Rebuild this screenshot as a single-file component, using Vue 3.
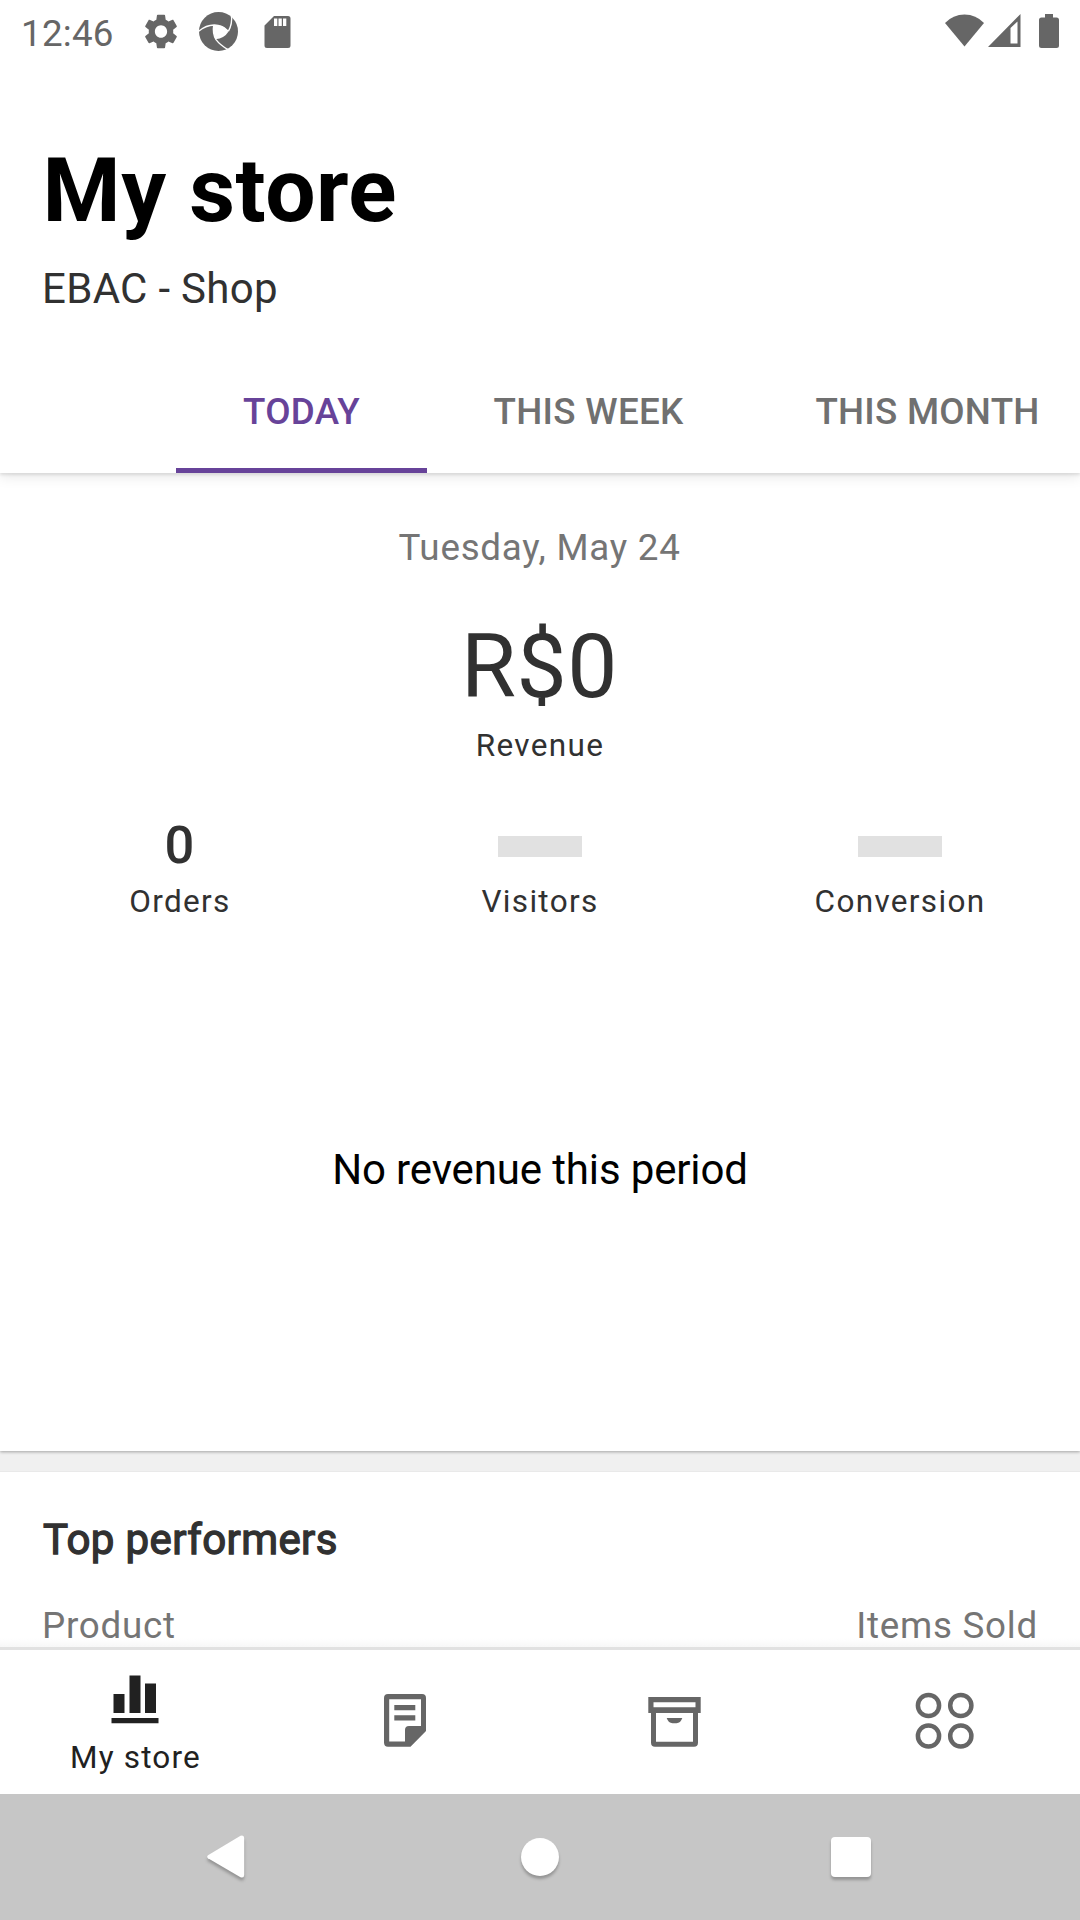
<script setup>
const tabs = [
  { label: 'TODAY', active: true, cls: 'tab-today' },
  { label: 'THIS WEEK', active: false, cls: 'tab-week' },
  { label: 'THIS MONTH', active: false, cls: 'tab-month' }
]
const stats = [
  { label: 'Orders', value: '0' },
  { label: 'Visitors', value: null },
  { label: 'Conversion', value: null }
]
</script>

<template>
  <div class="screen">
    <header class="status">
      <span class="clock">12:46</span>
      <svg class="gear" width="34" height="35" viewBox="2 2 20 20" preserveAspectRatio="none">
        <path d="M19.14 12.94c.04-.3.06-.61.06-.94 0-.32-.02-.64-.07-.94l2.03-1.58c.18-.14.23-.41.12-.61l-1.92-3.32c-.12-.22-.37-.29-.59-.22l-2.39.96c-.5-.38-1.03-.7-1.62-.94l-.36-2.54c-.04-.24-.24-.41-.48-.41h-3.84c-.24 0-.43.17-.47.41l-.36 2.54c-.59.24-1.13.57-1.62.94l-2.39-.96c-.22-.08-.47 0-.59.22L2.74 8.87c-.12.21-.08.47.12.61l2.03 1.58c-.05.3-.09.63-.09.94s.02.64.07.94l-2.03 1.58c-.18.14-.23.41-.12.61l1.92 3.32c.12.22.37.29.59.22l2.39-.96c.5.38 1.03.7 1.62.94l.36 2.54c.05.24.24.41.48.41h3.84c.24 0 .44-.17.47-.41l.36-2.54c.59-.24 1.13-.56 1.62-.94l2.39.96c.22.08.47 0 .59-.22l1.92-3.32c.12-.22.07-.47-.12-.61l-2.01-1.58zM12 15.6c-1.98 0-3.6-1.62-3.6-3.6s1.62-3.6 3.6-3.6 3.6 1.62 3.6 3.6-1.62 3.6-3.6 3.6z" />
      </svg>
      <svg class="shutter" width="39" height="39" viewBox="597 36 117 117">
        <circle cx="655.500" cy="94.500" r="58.500" />
        <path class="hole" d="M641 76Q660 74 672 81L685 95Q674 114 646 118Q638 96 641 76z" />
        <path class="slit" d="M596 94Q616 76 643 75Q666 75 684 93" />
        <path class="slit" d="M694 42Q698 72 685 94" />
        <path class="slit" d="M641 76Q637 100 648 119Q660 135 684 149" />
      </svg>
      <svg class="sd" width="27" height="34" viewBox="0 0 27 34">
        <path fill-rule="evenodd" d="M10 1H24Q26.500 1 26.500 3.500V30.500Q26.500 33 24 33H3Q.5 33 .5 30.500V10.500zM10 3.500V11H13.300V3.500zM14.500 3.500V11H17.800V3.500zM19 3.500V11H22.300V3.500z" />
      </svg>
      <span class="spacer"></span>
      <svg class="wifi" width="39" height="33" viewBox="0 0 39 33">
        <path d="M0 9Q8 .5 19.500 .5T39 9L19.500 32.500z" />
      </svg>
      <svg class="signal" width="33" height="33" viewBox="0 0 33 33">
        <path fill-rule="evenodd" d="M0 33L32.500 0V33zM22.500 14V29.500H29.500V7.500z" />
      </svg>
      <svg class="battery" width="20" height="34" viewBox="0 0 20 34">
        <path d="M6 0H14V3.500H17.500Q20 3.500 20 6V31.500Q20 34 17.500 34H2.500Q0 34 0 31.500V6Q0 3.500 2.500 3.500H6z" />
      </svg>
    </header>

    <section class="heading">
      <h1>My store</h1>
      <p>EBAC - Shop</p>
    </section>

    <nav class="tabs">
      <span v-for="t in tabs" :key="t.label" :class="['tab', t.cls, { active: t.active }]">{{ t.label }}</span>
    </nav>

    <main class="card">
      <p class="date">Tuesday, May 24</p>
      <p class="amount">R$0</p>
      <p class="caption revenue">Revenue</p>
      <div class="stats">
        <div v-for="s in stats" :key="s.label" class="stat">
          <div class="value">
            <span v-if="s.value !== null">{{ s.value }}</span>
            <i v-else class="skeleton"></i>
          </div>
          <p class="caption">{{ s.label }}</p>
        </div>
      </div>
      <p class="empty">No revenue this period</p>
    </main>

    <div class="gap"></div>

    <section class="performers">
      <h2>Top performers</h2>
      <div class="cols"><span>Product</span><span>Items Sold</span></div>
    </section>

    <nav class="bottom">
      <div class="item selected">
        <svg width="48" height="49" viewBox="0 0 48 49">
          <path d="M2.500 19h11v19h-11zM18.500 .5h11V38h-11zM34 8.500h11V38H34zM.5 43H47.500v5.300H.5z" />
        </svg>
        <span>My store</span>
      </div>
      <div class="item">
        <svg width="43" height="53" viewBox="0 0 43 53">
          <path fill-rule="evenodd" d="M4 0H38Q42 0 42 4V37L26.500 52.700H4Q0 52.700 0 48.500V4Q0 0 4 0zM5.200 5.300V47.500H21V36Q21 32 25 32H37V5.300z" />
          <path d="M10.300 11h21v5.300h-21zM10.300 21.300h21v5.300h-21z" />
        </svg>
      </div>
      <div class="item archive">
        <svg width="54" height="50" viewBox="0 0 54 50">
          <path fill-rule="evenodd" d="M.3 0H52.700V16H50V45.500Q50 49.800 46 49.800H7Q3 49.800 3 45.500V16H.3zM5.500 5.300V10.300H47.500V5.300zM8 16V44.700H45V16z" />
          <path d="M18.700 21H34.300Q32.500 26.200 28.500 26.200H24.500Q20.500 26.200 18.700 21z" />
        </svg>
      </div>
      <div class="item more">
        <svg width="60" height="58" viewBox="0 0 60 58" fill="none" stroke="#666" stroke-width="4.500">
          <circle cx="13.500" cy="13.500" r="10.600" />
          <circle cx="45.800" cy="13.500" r="10.600" />
          <circle cx="13.500" cy="44" r="10.600" />
          <circle cx="45.800" cy="44" r="10.600" />
        </svg>
      </div>
    </nav>

    <footer class="system">
      <svg class="back" width="38" height="44" viewBox="0 0 38 44"><path d="M1 20.300L33.500 .8Q37 -.5 37.200 3V40Q37 43.500 33.500 42.200L1 23.300Q-.6 21.800 1 20.300z" /></svg>
      <i class="home"></i>
      <i class="recents"></i>
    </footer>
  </div>
</template>

<style>
body { background: #fff; overflow: hidden; }
</style>

<style scoped>
.screen { width: 1080px; height: 1920px; display: flex; flex-direction: column; background: #fff; font-family: Roboto, "Noto Sans", sans-serif; color: #313131; overflow: hidden; }
h1, h2, p { margin: 0; font-weight: 400; white-space: nowrap; }
svg { display: block; flex: none; }

.status { height: 63px; flex: none; display: flex; align-items: flex-start; padding: 0 21px; box-sizing: border-box; fill: #666; color: #666; }
.clock { font-size: 36.75px; line-height: 44px; letter-spacing: .25px; margin-top: 12px; width: 123px; }
.gear { margin-top: 14px; }
.shutter { margin: 12px 0 0 21px; }
.sd { margin: 15px 0 0 26px; }
.hole { fill: #fff; }
.slit { fill: none; stroke: #fff; stroke-width: 4; }
.spacer { flex: 1; }
.wifi { margin-top: 14px; }
.signal { margin: 14px 0 0 4px; }
.battery { margin: 14px 0 0 18px; }

.heading { height: 284px; flex: none; padding: 74px 42px 0; box-sizing: border-box; position: relative; z-index: 2; background: #fff; }
h1 { color: #000; font-size: 89.25px; font-weight: 700; line-height: 107px; letter-spacing: .5px; padding-left: .5px; }
.heading p { font-size: 42px; line-height: 50px; margin-top: 20px; letter-spacing: .3px; }

.tabs { height: 126px; flex: none; display: flex; padding-left: 176px; position: relative; z-index: 1; background: #fff; box-shadow: 0 2px 3px rgba(0,0,0,.1), 0 5px 12px rgba(0,0,0,.08); }
.tab { flex: none; box-sizing: border-box; height: 126px; line-height: 129px; text-align: center; font-size: 36.75px; font-weight: 500; color: #707070; white-space: nowrap; }
.tab-today { width: 251px; letter-spacing: .25px; }
.tab-week { width: 323px; letter-spacing: .3px; }
.tab-month { width: 355px; letter-spacing: .25px; }
.active { color: #674399; border-bottom: 5px solid #674399; }

.card { height: 978px; flex: none; box-sizing: border-box; padding-top: 53px; background: #fff; text-align: center; display: flex; flex-direction: column; box-shadow: 0 1px 3px rgba(0,0,0,.32); z-index: 0; position: relative; }
.date { font-size: 36.75px; line-height: 44px; letter-spacing: .76px; color: #757575; margin-left: -1px; }
.amount { font-size: 89.25px; line-height: 106px; letter-spacing: .5px; margin: 44px 0 0 -1px; }
.caption { font-size: 31.5px; line-height: 38px; letter-spacing: 1.32px; }
.revenue { margin-top: 7px; }
.stats { display: flex; margin-top: 49px; }
.stat { flex: 1; }
.value { height: 62px; margin-bottom: 7px; line-height: 62px; font-size: 52.5px; font-weight: 500; display: flex; justify-content: center; }
.value span { margin-right: 1px; }
.skeleton { width: 84px; height: 21px; margin-top: 22px; background: #e1e1e1; }
.empty { color: #000; font-size: 42px; line-height: 50px; letter-spacing: -.14px; margin-top: 224px; }

.gap { height: 21px; flex: none; background: #f0f0f0; box-sizing: border-box; border-bottom: 1px solid #e9e9e9; }

.performers { height: 175px; flex: none; box-sizing: border-box; padding: 43px 42px 0; overflow: hidden; background: linear-gradient(#fff, #fff 166px, #f7f7f7); }
h2 { font-size: 42px; line-height: 50px; letter-spacing: .4px; -webkit-text-stroke: 1.3px #313131; padding-left: 1px; }
.cols { display: flex; justify-content: space-between; margin-top: 39px; font-size: 36.75px; line-height: 44px; letter-spacing: .76px; color: #757575; }

.bottom { height: 147px; flex: none; box-sizing: border-box; border-top: 3px solid #e1e1e1; display: flex; fill: #666; background: #fff; }
.item { flex: 1; display: flex; flex-direction: column; align-items: center; padding-top: 44px; }
.selected { padding-top: 25px; fill: #212121; color: #212121; }
.selected span { font-size: 31.5px; line-height: 38px; letter-spacing: 1.17px; margin: 15px 0 0 1px; }
.archive { padding-top: 47px; }
.more { padding-top: 42px; }

.system { height: 126px; flex: none; box-sizing: border-box; background: #c6c6c6; display: flex; align-items: center; padding: 0 209px 0 207px; fill: #fff; }
.back { filter: drop-shadow(0 3px 1.5px rgba(0,0,0,.25)); overflow: visible; }
.home { width: 38px; height: 38px; margin: 0 auto 0 276px; border-radius: 50%; background: #fff; box-shadow: 0 3px 3px rgba(0,0,0,.25); }
.recents { width: 40px; height: 40px; border-radius: 4px; background: #fff; box-shadow: 0 3px 3px rgba(0,0,0,.25); }
</style>
